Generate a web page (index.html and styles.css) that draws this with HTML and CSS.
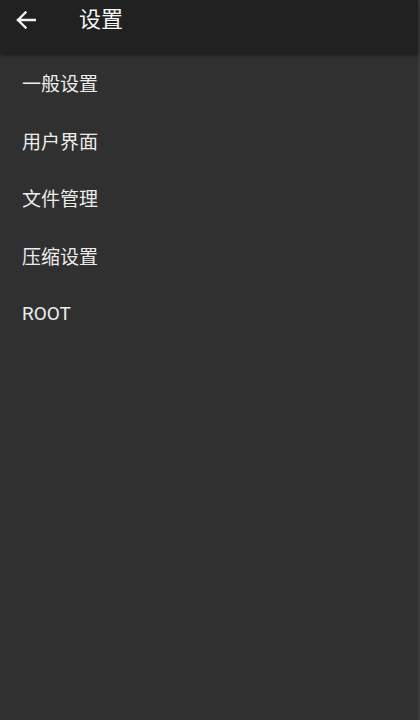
FILE: index.html
```html
<!DOCTYPE html>
<html lang="zh-CN">
<head>
<meta charset="utf-8">
<title>设置</title>
<link rel="stylesheet" href="styles.css">
</head>
<body>
<div class="app">
  <header class="toolbar">
    <span class="back" aria-label="返回">
      <svg width="20" height="18" viewBox="0 0 20 18"><path d="M9.5 1.5 L2 9 L9.5 16.5 M2 9 H19" fill="none" stroke="#f2f2f2" stroke-width="2.4" stroke-linecap="square" stroke-linejoin="miter"/></svg>
    </span>
    <h1 class="title">设置</h1>
  </header>
  <ul class="menu">
    <li class="item">一般设置</li>
    <li class="item">用户界面</li>
    <li class="item">文件管理</li>
    <li class="item">压缩设置</li>
    <li class="item latin">ROOT</li>
  </ul>
</div>
</body>
</html>
```
FILE: styles.css
```css
html, body {
  margin: 0;
  padding: 0;
  height: 100%;
  background: #303030;
}
body {
  font-family: Roboto, "Noto Sans CJK SC", sans-serif;
  color: #e6e6e6;
}
.app {
  height: 720px;
  display: flex;
  flex-direction: column;
  background: #303030;
  border-right: 2px solid #3a3a3a;
  box-sizing: border-box;
}
.toolbar {
  height: 53px;
  flex: 0 0 53px;
  background: #212121;
  display: flex;
  align-items: center;
  box-shadow: 0 2px 4px rgba(0,0,0,0.45);
  position: relative;
  z-index: 1;
  box-sizing: border-box;
}
.back {
  width: 20px;
  height: 18px;
  margin-left: 16px;
  margin-top: -13px;
  display: flex;
}
.title {
  margin: -13px 0 0 43px;
  font-size: 22px;
  font-weight: normal;
  color: #f6f6f6;
  line-height: 1;
}
.menu {
  list-style: none;
  margin: 0;
  padding: 1px 0 0;
}
.item {
  height: 57.5px;
  display: flex;
  align-items: center;
  padding-left: 22px;
  font-size: 19px;
  font-weight: normal;
  color: #ececec;
}
.latin {
  font-size: 19px;
  padding-top: 2px;
  box-sizing: border-box;
}
```
